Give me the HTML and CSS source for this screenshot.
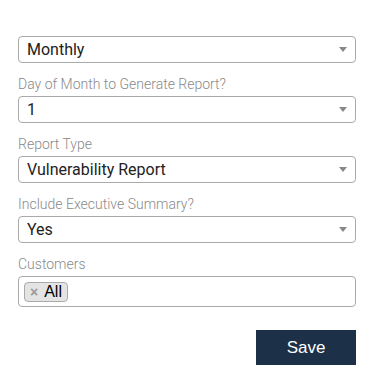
FILE: index.html
```html
<!DOCTYPE html>
<html lang="en">
<head>
    <meta charset="UTF-8">
    <title>Report Schedule</title>
    <link rel="stylesheet" href="styles.css">
</head>
<body>
<form class="report-form">
    <div class="field">
        <div class="select">
            <span class="select-value">Monthly</span>
            <span class="select-arrow"></span>
        </div>
    </div>
    <div class="field">
        <label>Day of Month to Generate Report?</label>
        <div class="select">
            <span class="select-value">1</span>
            <span class="select-arrow"></span>
        </div>
    </div>
    <div class="field">
        <label>Report Type</label>
        <div class="select">
            <span class="select-value">Vulnerability Report</span>
            <span class="select-arrow"></span>
        </div>
    </div>
    <div class="field">
        <label>Include Executive Summary?</label>
        <div class="select">
            <span class="select-value">Yes</span>
            <span class="select-arrow"></span>
        </div>
    </div>
    <div class="field">
        <label>Customers</label>
        <div class="multi-select">
            <span class="tag"><span class="tag-remove">×</span>All</span>
        </div>
    </div>
    <div class="actions">
        <button type="button" class="btn-save">Save</button>
    </div>
</form>
</body>
</html>
```

FILE: styles.css
```css
body {
    margin: 0;
    background: #fff;
    font-family: Roboto, "Liberation Sans", sans-serif;
}
.report-form {
    width: 338px;
    padding: 36px 0 0 18px;
}
.field {
    margin-bottom: 13px;
}
.field label {
    display: block;
    font-size: 14px;
    font-weight: 300;
    line-height: 17px;
    color: #8a8a8a;
    margin-bottom: 3px;
}
.select {
    height: 27px;
    box-sizing: border-box;
    border: 1px solid #aaa;
    border-radius: 4px;
    display: flex;
    align-items: center;
    padding: 0 8px;
}
.select-value {
    flex: 1;
    font-size: 16px;
    font-weight: 400;
    color: #222;
}
.select-arrow {
    width: 0;
    height: 0;
    border-left: 4px solid transparent;
    border-right: 4px solid transparent;
    border-top: 5px solid #888;
    margin-right: 0;
}
.multi-select {
    height: 31px;
    box-sizing: border-box;
    border: 1px solid #aaa;
    border-radius: 4px;
    padding: 5px;
}
.tag {
    display: inline-flex;
    align-items: center;
    height: 20px;
    box-sizing: border-box;
    padding: 0 5px;
    background: #e4e4e4;
    border: 1px solid #aaa;
    border-radius: 4px;
    font-family: "Liberation Sans", Arial, sans-serif;
    font-size: 16px;
    color: #000;
}
.tag-remove {
    color: #999;
    font-weight: bold;
    font-size: 14px;
    margin-right: 6px;
}
.actions {
    display: flex;
    justify-content: flex-end;
    margin-top: 23px;
}
.btn-save {
    width: 100px;
    height: 35px;
    border: none;
    background: #1c3048;
    color: #fff;
    font-family: "Liberation Sans", Arial, sans-serif;
    font-size: 17px;
}
```
